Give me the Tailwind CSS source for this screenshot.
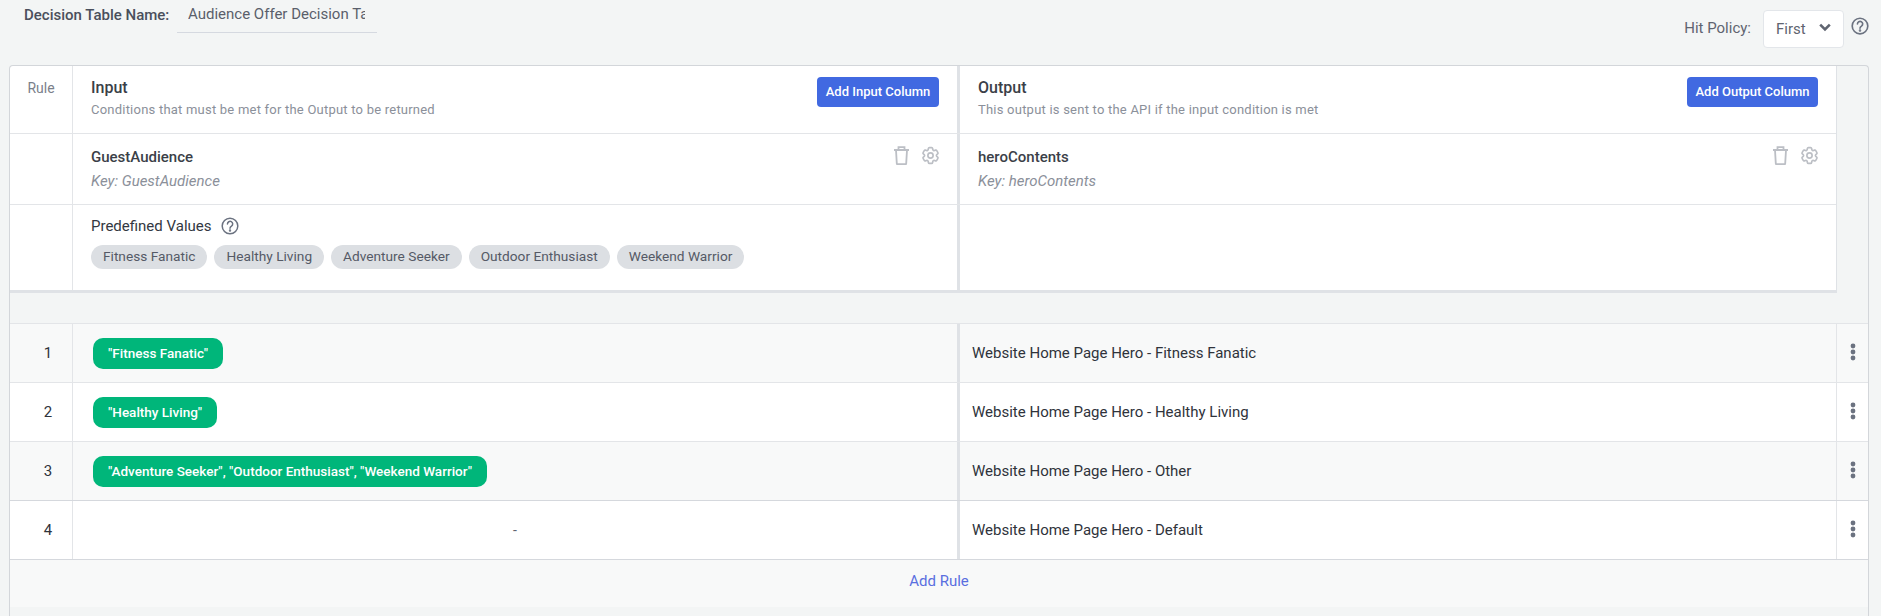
<!DOCTYPE html>
<html lang="en">
<head>
  <meta charset="UTF-8">
  <title>Decision Table</title>
  <script src="https://cdn.jsdelivr.net/npm/@tailwindcss/browser@4"></script>
</head>
<body class="bg-[#f3f5f5] text-[#3b3f48] font-['Roboto',sans-serif] overflow-hidden">
  <!-- Top bar -->
  <header class="h-[65px] pl-[24px] pr-3 flex justify-between">
    <div class="flex items-start">
      <span class="w-[153px] mt-[6px] text-[15px] font-medium leading-[18px] text-[#4a4f5c]">Decision Table Name:</span>
      <div class="w-[200px] h-[33px] pl-[11px] pr-3 border-b border-[#d5d9e0] text-[15px] leading-[28px] text-[#5a5f6b]">
        <div class="overflow-hidden whitespace-nowrap">Audience Offer Decision Table</div>
      </div>
    </div>
    <div class="flex items-start">
      <span class="mt-[19px] mr-[12px] text-[15px] leading-[18px] text-[#5f6470]">Hit Policy:</span>
      <div class="mt-[10px] w-[81px] h-[38px] pl-3 pr-3 bg-white border border-[#e3e6ea] rounded flex items-center justify-between text-[15px] text-[#5f6470]">
        First
        <svg class="w-[12px] h-[9px] mb-[3px]" viewBox="0 0 12 9" fill="none" stroke="#5f6470" stroke-width="2.6"><path d="M1.2 1.6 6 6.4l4.8-4.8"/></svg>
      </div>
      <svg class="mt-[17px] ml-[7px] w-[18px] h-[18px]" viewBox="0 0 24 24" fill="none" stroke="#6b7280" stroke-width="2.2"><circle cx="12" cy="12" r="10.4"/><path stroke-linecap="round" d="M8.6 9.2a3.5 3.4 0 1 1 5.4 2.9c-1.2.8-2 1.4-2 2.9"/><circle cx="12" cy="18" r=".6" fill="#6b7280"/></svg>
    </div>
  </header>

  <!-- Table -->
  <main class="ml-[9px] w-[1860px] border-l border-r border-t border-[#d3d6da] rounded-t">
    <div class="w-[1827px] border-r border-[#dfe2e6] bg-white rounded-tl">
      <div class="grid grid-cols-[63px_887px_1fr] h-[68px] border-b border-[#e3e5e8]">
        <div class="border-r border-[#e3e5e8] text-center text-sm text-[#7b808a] pt-[13px] leading-[18px]">Rule</div>
        <div class="border-r-[3px] border-[#dfe2e6] pl-[18px] pr-[18px] flex justify-between">
          <div>
            <div class="pt-[12px] text-base font-medium leading-[20px]">Input</div>
            <div class="pt-[3px] text-[13px] leading-[18px] text-[#8b909a] tracking-[0.22px]">Conditions that must be met for the Output to be returned</div>
          </div>
          <button class="mt-[11px] w-[122px] h-[30px] bg-[#4169e1] text-white text-[13px] font-medium rounded">Add Input Column</button>
        </div>
        <div class="pl-[18px] pr-[18px] flex justify-between">
          <div>
            <div class="pt-[12px] text-base font-medium leading-[20px]">Output</div>
            <div class="pt-[3px] text-[13px] leading-[18px] text-[#8b909a] tracking-[0.22px]">This output is sent to the API if the input condition is met</div>
          </div>
          <button class="mt-[11px] w-[131px] h-[30px] bg-[#4169e1] text-white text-[13px] font-medium rounded">Add Output Column</button>
        </div>
      </div>

      <div class="grid grid-cols-[63px_887px_1fr] h-[71px] border-b border-[#e3e5e8]">
        <div class="border-r border-[#e3e5e8]"></div>
        <div class="border-r-[3px] border-[#dfe2e6] pl-[18px] pr-[18px] flex justify-between">
          <div>
            <div class="pt-[13px] text-[15px] font-medium leading-[20px]">GuestAudience</div>
            <div class="pt-[4px] text-[15px] italic leading-[20px] text-[#8b909a]">Key: GuestAudience</div>
          </div>
          <div class="flex items-center gap-[10px] pt-[11px] -mr-[2px] h-fit">
            <svg class="w-[17px] h-[19px]" viewBox="0 0 17 19" fill="none" stroke="#bcbfc5" stroke-width="1.8"><path d="M1 4h15M5.5 4V1.2h6V4M3 4l.8 13.6c0 .3.3.6.6.6h8.2c.3 0 .6-.3.6-.6L14 4"/></svg>
            <svg class="w-[21px] h-[21px]" viewBox="0 0 24 24" fill="none" stroke="#bcbfc5" stroke-width="1.9"><path stroke-linejoin="round" d="M9.594 3.94c.09-.542.56-.94 1.11-.94h2.593c.55 0 1.02.398 1.11.94l.213 1.281c.063.374.313.686.645.87.074.04.147.083.22.127.325.196.72.257 1.075.124l1.217-.456a1.125 1.125 0 0 1 1.37.49l1.296 2.247a1.125 1.125 0 0 1-.26 1.431l-1.003.827c-.293.241-.438.613-.43.992a7.723 7.723 0 0 1 0 .255c-.008.378.137.75.43.991l1.004.827c.424.35.534.955.26 1.43l-1.298 2.247a1.125 1.125 0 0 1-1.369.491l-1.217-.456c-.355-.133-.75-.072-1.076.124a6.47 6.47 0 0 1-.22.128c-.331.183-.581.495-.644.869l-.213 1.281c-.09.543-.56.94-1.11.94h-2.594c-.55 0-1.019-.398-1.11-.94l-.213-1.281c-.062-.374-.312-.686-.644-.87a6.52 6.52 0 0 1-.22-.127c-.325-.196-.72-.257-1.076-.124l-1.217.456a1.125 1.125 0 0 1-1.369-.49l-1.297-2.247a1.125 1.125 0 0 1 .26-1.431l1.004-.827c.292-.24.437-.613.43-.991a6.932 6.932 0 0 1 0-.255c.007-.38-.138-.751-.43-.992l-1.004-.827a1.125 1.125 0 0 1-.26-1.43l1.297-2.247a1.125 1.125 0 0 1 1.37-.491l1.216.456c.356.133.751.072 1.076-.124.072-.044.146-.086.22-.128.332-.183.582-.495.644-.869l.214-1.28Z"/><path d="M15 12a3 3 0 1 1-6 0 3 3 0 0 1 6 0Z"/></svg>
          </div>
        </div>
        <div class="pl-[18px] pr-[18px] flex justify-between">
          <div>
            <div class="pt-[13px] text-[15px] font-medium leading-[20px]">heroContents</div>
            <div class="pt-[4px] text-[15px] italic leading-[20px] text-[#8b909a]">Key: heroContents</div>
          </div>
          <div class="flex items-center gap-[10px] pt-[11px] -mr-[2px] h-fit">
            <svg class="w-[17px] h-[19px]" viewBox="0 0 17 19" fill="none" stroke="#bcbfc5" stroke-width="1.8"><path d="M1 4h15M5.5 4V1.2h6V4M3 4l.8 13.6c0 .3.3.6.6.6h8.2c.3 0 .6-.3.6-.6L14 4"/></svg>
            <svg class="w-[21px] h-[21px]" viewBox="0 0 24 24" fill="none" stroke="#bcbfc5" stroke-width="1.9"><path stroke-linejoin="round" d="M9.594 3.94c.09-.542.56-.94 1.11-.94h2.593c.55 0 1.02.398 1.11.94l.213 1.281c.063.374.313.686.645.87.074.04.147.083.22.127.325.196.72.257 1.075.124l1.217-.456a1.125 1.125 0 0 1 1.37.49l1.296 2.247a1.125 1.125 0 0 1-.26 1.431l-1.003.827c-.293.241-.438.613-.43.992a7.723 7.723 0 0 1 0 .255c-.008.378.137.75.43.991l1.004.827c.424.35.534.955.26 1.43l-1.298 2.247a1.125 1.125 0 0 1-1.369.491l-1.217-.456c-.355-.133-.75-.072-1.076.124a6.47 6.47 0 0 1-.22.128c-.331.183-.581.495-.644.869l-.213 1.281c-.09.543-.56.94-1.11.94h-2.594c-.55 0-1.019-.398-1.11-.94l-.213-1.281c-.062-.374-.312-.686-.644-.87a6.52 6.52 0 0 1-.22-.127c-.325-.196-.72-.257-1.076-.124l-1.217.456a1.125 1.125 0 0 1-1.369-.49l-1.297-2.247a1.125 1.125 0 0 1 .26-1.431l1.004-.827c.292-.24.437-.613.43-.991a6.932 6.932 0 0 1 0-.255c.007-.38-.138-.751-.43-.992l-1.004-.827a1.125 1.125 0 0 1-.26-1.43l1.297-2.247a1.125 1.125 0 0 1 1.37-.491l1.216.456c.356.133.751.072 1.076-.124.072-.044.146-.086.22-.128.332-.183.582-.495.644-.869l.214-1.28Z"/><path d="M15 12a3 3 0 1 1-6 0 3 3 0 0 1 6 0Z"/></svg>
          </div>
        </div>
      </div>

      <div class="grid grid-cols-[63px_887px_1fr] h-[88px] border-b-[3px] border-[#dfe2e6]">
        <div class="border-r border-[#e3e5e8]"></div>
        <div class="border-r-[3px] border-[#dfe2e6] pl-[18px]">
          <div class="pt-[11px] flex items-center gap-[9px] text-[15px] leading-[20px] text-[#333842]">
            Predefined Values
            <svg class="w-[18px] h-[18px]" viewBox="0 0 24 24" fill="none" stroke="#6b7280" stroke-width="2"><circle cx="12" cy="12" r="10.4"/><path stroke-linecap="round" d="M8.6 9.2a3.5 3.4 0 1 1 5.4 2.9c-1.2.8-2 1.4-2 2.9"/><circle cx="12" cy="18" r=".6" fill="#6b7280"/></svg>
          </div>
          <div class="mt-[9px] flex gap-[7px] text-[13.7px] text-[#555a66]">
            <span class="h-[24px] leading-[22px] px-3 rounded-full bg-[#dcdfe3]">Fitness Fanatic</span>
            <span class="h-[24px] leading-[22px] px-3 rounded-full bg-[#dcdfe3]">Healthy Living</span>
            <span class="h-[24px] leading-[22px] px-3 rounded-full bg-[#dcdfe3]">Adventure Seeker</span>
            <span class="h-[24px] leading-[22px] px-3 rounded-full bg-[#dcdfe3]">Outdoor Enthusiast</span>
            <span class="h-[24px] leading-[22px] px-3 rounded-full bg-[#dcdfe3]">Weekend Warrior</span>
          </div>
        </div>
        <div></div>
      </div>
    </div>

    <div class="h-[30px]"></div>

    <!-- Rules -->
    <div class="border-t border-[#e3e5e8] text-[#2f333b]">
      <div class="grid grid-cols-[63px_887px_1fr_32px] h-[59px] bg-[#f8f9f9] border-b border-[#e3e5e8] items-stretch">
        <div class="border-r border-[#e3e5e8] flex items-center justify-center pl-[14px] text-[15px]">1</div>
        <div class="border-r-[3px] border-[#dfe2e6] pl-[20px] flex items-center">
          <span class="h-[31px] leading-[31px] px-[15px] rounded-[10px] bg-[#00b67a] text-white text-[13.5px] font-medium">"Fitness Fanatic"</span>
        </div>
        <div class="pl-3 flex items-center text-[15px]">Website Home Page Hero - Fitness Fanatic</div>
        <div class="border-l border-[#e3e5e8] flex items-center justify-center pb-[2px]">
          <svg class="w-[6px] h-[18px]" viewBox="0 0 6 18" fill="#6b7280"><circle cx="3" cy="3" r="2.4"/><circle cx="3" cy="9" r="2.4"/><circle cx="3" cy="15" r="2.4"/></svg>
        </div>
      </div>
      <div class="grid grid-cols-[63px_887px_1fr_32px] h-[59px] bg-white border-b border-[#e3e5e8] items-stretch">
        <div class="border-r border-[#e3e5e8] flex items-center justify-center pl-[14px] text-[15px]">2</div>
        <div class="border-r-[3px] border-[#dfe2e6] pl-[20px] flex items-center">
          <span class="h-[31px] leading-[31px] px-[15px] rounded-[10px] bg-[#00b67a] text-white text-[13.5px] font-medium">"Healthy Living"</span>
        </div>
        <div class="pl-3 flex items-center text-[15px]">Website Home Page Hero - Healthy Living</div>
        <div class="border-l border-[#e3e5e8] flex items-center justify-center pb-[2px]">
          <svg class="w-[6px] h-[18px]" viewBox="0 0 6 18" fill="#6b7280"><circle cx="3" cy="3" r="2.4"/><circle cx="3" cy="9" r="2.4"/><circle cx="3" cy="15" r="2.4"/></svg>
        </div>
      </div>
      <div class="grid grid-cols-[63px_887px_1fr_32px] h-[59px] bg-[#f8f9f9] border-b border-[#d5d8dd] items-stretch">
        <div class="border-r border-[#e3e5e8] flex items-center justify-center pl-[14px] text-[15px]">3</div>
        <div class="border-r-[3px] border-[#dfe2e6] pl-[20px] flex items-center">
          <span class="h-[31px] leading-[31px] px-[15px] rounded-[10px] bg-[#00b67a] text-white text-[13.5px] font-medium">"Adventure Seeker", "Outdoor Enthusiast", "Weekend Warrior"</span>
        </div>
        <div class="pl-3 flex items-center text-[15px]">Website Home Page Hero - Other</div>
        <div class="border-l border-[#e3e5e8] flex items-center justify-center pb-[2px]">
          <svg class="w-[6px] h-[18px]" viewBox="0 0 6 18" fill="#6b7280"><circle cx="3" cy="3" r="2.4"/><circle cx="3" cy="9" r="2.4"/><circle cx="3" cy="15" r="2.4"/></svg>
        </div>
      </div>
      <div class="grid grid-cols-[63px_887px_1fr_32px] h-[59px] bg-white border-b border-[#d5d8dd] items-stretch">
        <div class="border-r border-[#e3e5e8] flex items-center justify-center pl-[14px] text-[15px]">4</div>
        <div class="border-r-[3px] border-[#dfe2e6] flex items-center justify-center text-sm text-[#5f6470]">-</div>
        <div class="pl-3 flex items-center text-[15px]">Website Home Page Hero - Default</div>
        <div class="border-l border-[#e3e5e8] flex items-center justify-center pb-[2px]">
          <svg class="w-[6px] h-[18px]" viewBox="0 0 6 18" fill="#6b7280"><circle cx="3" cy="3" r="2.4"/><circle cx="3" cy="9" r="2.4"/><circle cx="3" cy="15" r="2.4"/></svg>
        </div>
      </div>
      <div class="h-[47px] pb-1 bg-[#f8f9f9] flex items-center justify-center text-[15px] text-[#5a6fe0]">Add Rule</div>
    </div>
    <div class="h-[9px]"></div>
  </main>
</body>
</html>
